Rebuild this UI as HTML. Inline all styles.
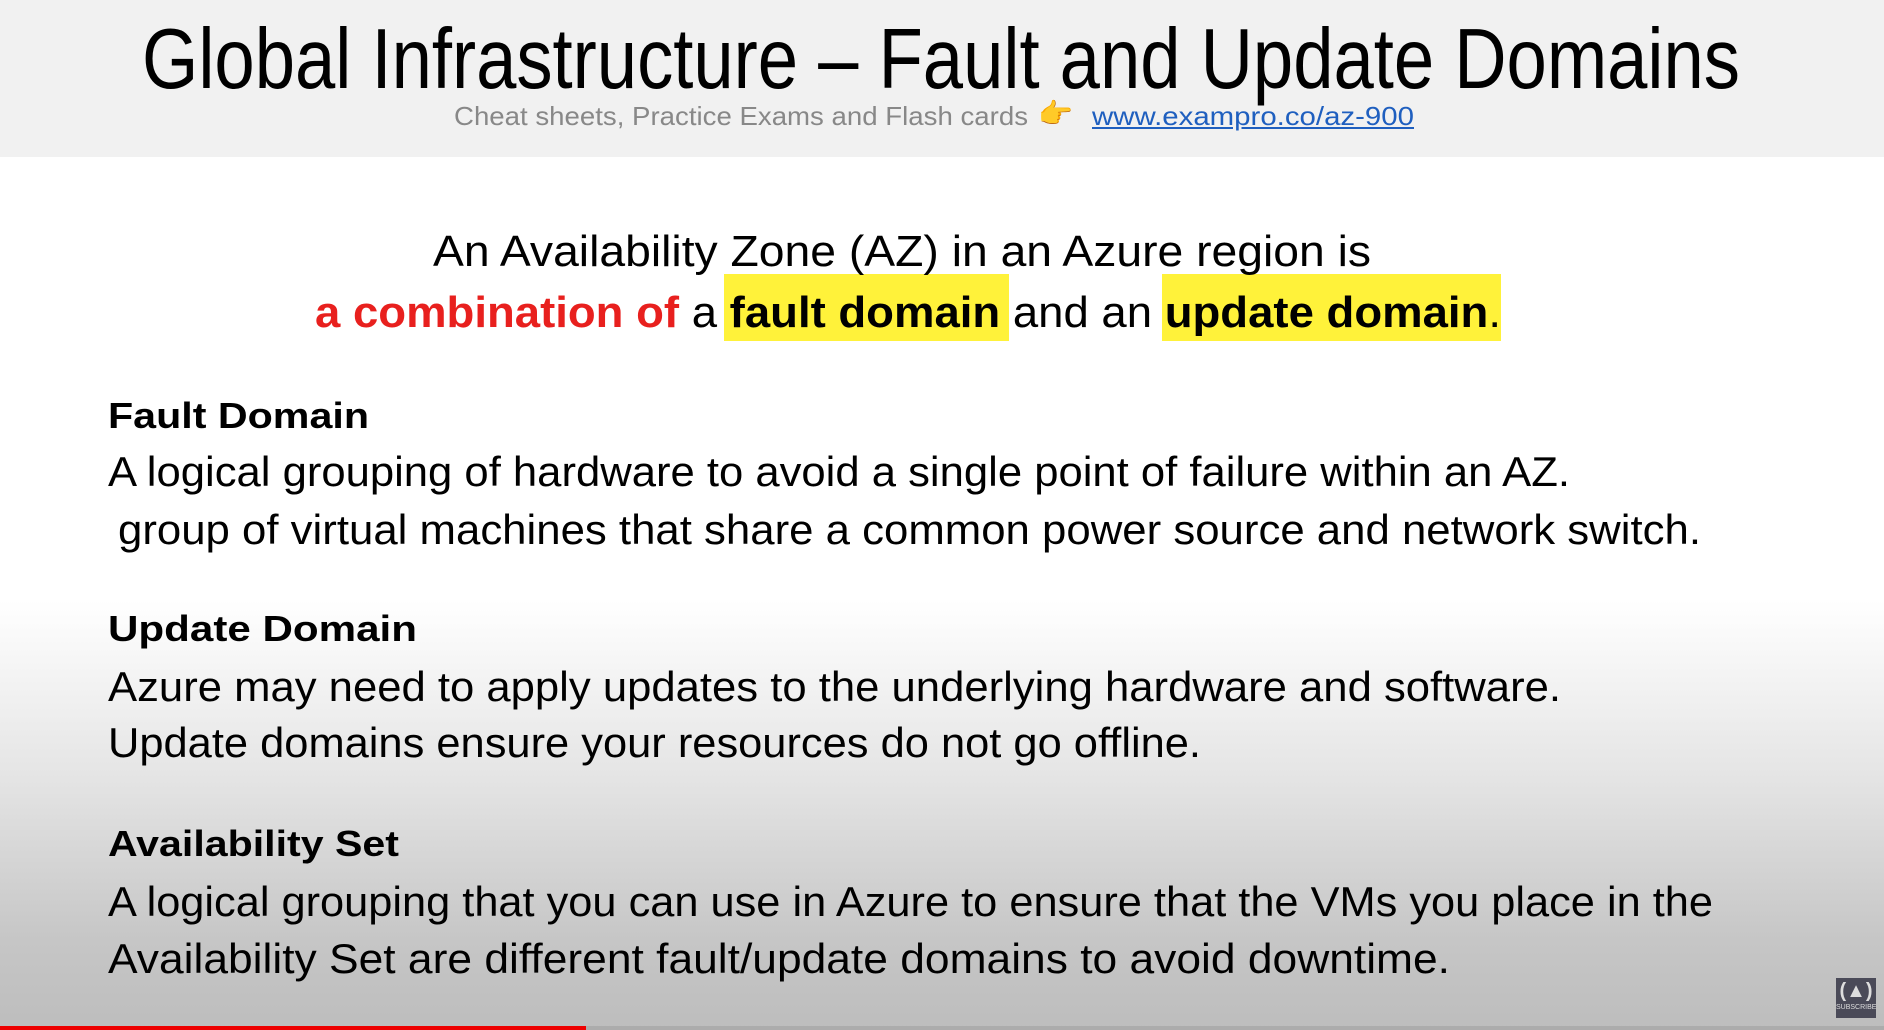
<!DOCTYPE html>
<html><head><meta charset="utf-8"><style>
html,body{margin:0;padding:0}
body{width:1884px;height:1030px;position:relative;overflow:hidden;font-family:"Liberation Sans",sans-serif;
background:linear-gradient(to bottom,#fff 0px,#fff 600px,#e4e4e4 780px,#c6c6c6 940px,#bdbdbd 1030px);}
.hdr{position:absolute;left:0;top:0;width:1884px;height:157px;background:#f1f1f1}
.t{position:absolute;white-space:nowrap;line-height:1;transform-origin:0 0;color:#000}
.b{font-weight:bold}
.hl{position:absolute;background:#fff23a;top:274px;height:67px}
</style></head><body>
<div class="hdr"></div>
<div class="t" style="left:142px;top:17px;font-size:85px;--w:1598">Global Infrastructure – Fault and Update Domains</div>
<div class="t" style="left:454px;top:103px;font-size:26px;color:#888;--w:574">Cheat sheets, Practice Exams and Flash cards</div>
<div class="t" style="left:1038px;top:100px;font-size:28px;color:#f0a830">👉</div>
<div class="t" style="left:1092px;top:103px;font-size:26px;color:#1f5fbf;text-decoration:underline;--w:322">www.exampro.co/az-900</div>

<div class="hl" style="left:724px;width:285px"></div>
<div class="hl" style="left:1162px;width:339px"></div>
<div class="t" style="left:433px;top:230px;font-size:44px;--w:938">An Availability Zone (AZ) in an Azure region is</div>
<div class="t" style="left:315px;top:291px;font-size:44px;--w:1186"><span class="b" style="color:#e8201e">a combination of</span> a <span class="b">fault domain</span> and an <span class="b">update domain</span>.</div>

<div class="t b" style="left:108px;top:398px;font-size:36px;--w:261">Fault Domain</div>
<div class="t" style="left:108px;top:451px;font-size:42px;--w:1462">A logical grouping of hardware to avoid a single point of failure within an AZ.</div>
<div class="t" style="left:118px;top:509px;font-size:42px;--w:1583">group of virtual machines that share a common power source and network switch.</div>

<div class="t b" style="left:108px;top:611px;font-size:36px;--w:309">Update Domain</div>
<div class="t" style="left:108px;top:666px;font-size:42px;--w:1453">Azure may need to apply updates to the underlying hardware and software.</div>
<div class="t" style="left:108px;top:722px;font-size:42px;--w:1093">Update domains ensure your resources do not go offline.</div>

<div class="t b" style="left:108px;top:826px;font-size:36px;--w:291">Availability Set</div>
<div class="t" style="left:108px;top:881px;font-size:42px;--w:1605">A logical grouping that you can use in Azure to ensure that the VMs you place in the</div>
<div class="t" style="left:108px;top:938px;font-size:42px;--w:1342">Availability Set are different fault/update domains to avoid downtime.</div>

<div style="position:absolute;left:0;top:1026px;width:1884px;height:4px;background:rgba(160,160,160,.6)"></div>
<div style="position:absolute;left:0;top:1026px;width:586px;height:4px;background:#e00"></div>
<div style="position:absolute;left:1836px;top:978px;width:40px;height:40px;background:#4a4a58;color:#ddd;font-size:7px;text-align:center;line-height:1">
<div style="font-size:20px;line-height:26px;font-weight:bold">(&#9650;)</div>SUBSCRIBE</div>
<script>
document.querySelectorAll('.t').forEach(function(e){
 var w=parseFloat(getComputedStyle(e).getPropertyValue('--w'));
 if(w){var r=e.getBoundingClientRect().width;if(r>0)e.style.transform='scaleX('+(w/r)+')';}
});
</script>
</body></html>
